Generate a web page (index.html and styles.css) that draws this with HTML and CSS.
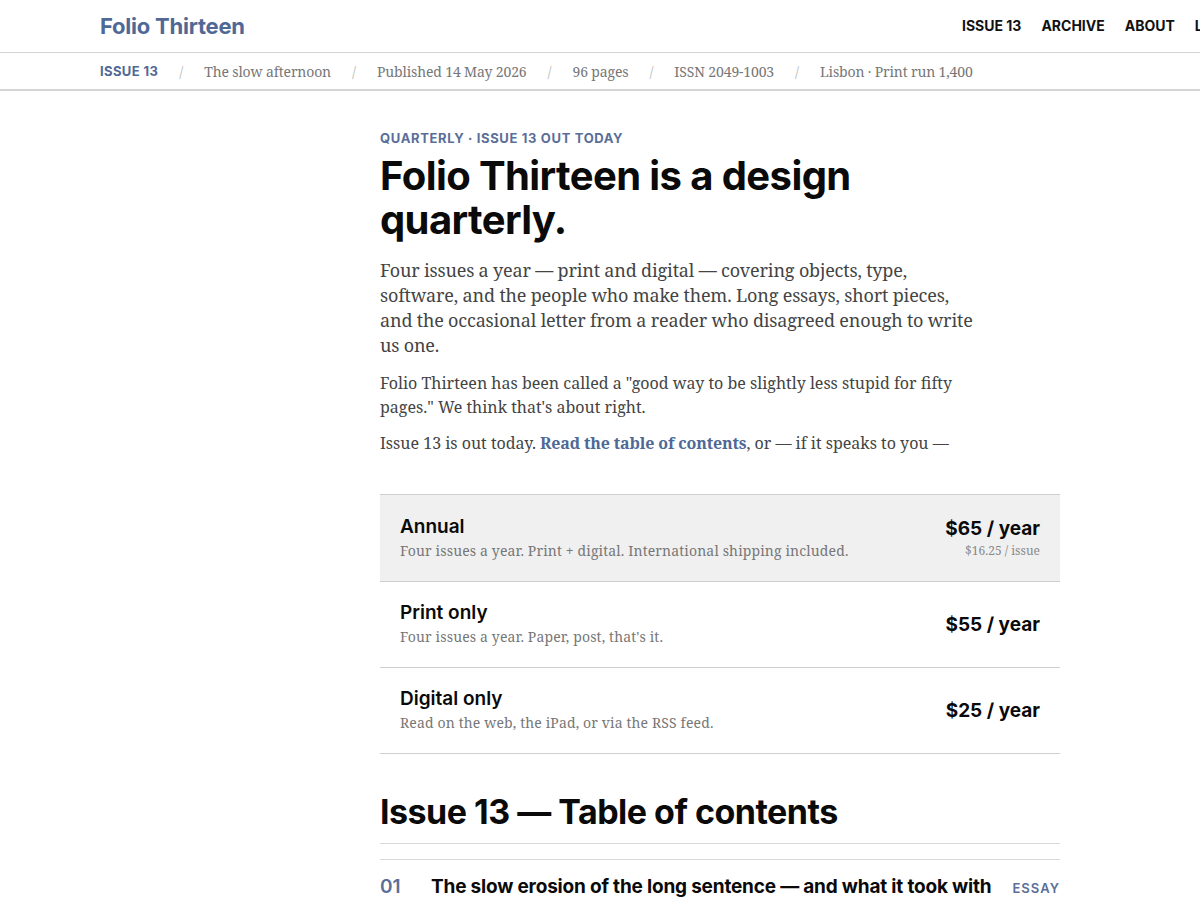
FILE: index.html
```html
<!DOCTYPE html>
<html lang="en">
<head>
<meta charset="utf-8">
<title>Folio Thirteen</title>
<link rel="stylesheet" href="styles.css">
</head>
<body>
<header class="site-header">
  <div class="header-inner">
    <a class="logo" href="#">Folio Thirteen</a>
    <nav class="nav">
      <a href="#">ISSUE 13</a>
      <a href="#">ARCHIVE</a>
      <a href="#">ABOUT</a>
      <a href="#">LOG IN</a>
    </nav>
  </div>
</header>
<div class="issue-bar">
  <div class="issue-inner">
    <span class="issue-tag">ISSUE 13</span>
    <span class="sep">/</span>
    <span>The slow afternoon</span>
    <span class="sep">/</span>
    <span>Published 14 May 2026</span>
    <span class="sep">/</span>
    <span>96 pages</span>
    <span class="sep">/</span>
    <span>ISSN 2049-1003</span>
    <span class="sep">/</span>
    <span>Lisbon · Print run 1,400</span>
  </div>
</div>
<main class="page">
  <aside class="side"></aside>
  <div class="content">
    <p class="eyebrow">QUARTERLY · ISSUE 13 OUT TODAY</p>
    <h1 class="title">Folio Thirteen is a design quarterly.</h1>
    <p class="lead">Four issues a year — print and digital — covering objects, type, software, and the people who make them. Long essays, short pieces, and the occasional letter from a reader who disagreed enough to write us one.</p>
    <p class="body">Folio Thirteen has been called a "good way to be slightly less stupid for fifty pages." We think that's about right.</p>
    <p class="body">Issue 13 is out today. <a class="link" href="#">Read the table of contents</a>, or — if it speaks to you —</p>

    <div class="plans">
      <div class="plan plan-featured">
        <div class="plan-info">
          <div class="plan-name">Annual</div>
          <div class="plan-desc">Four issues a year. Print + digital. International shipping included.</div>
        </div>
        <div class="plan-price">
          <div class="price">$65 / year</div>
          <div class="per">$16.25 / issue</div>
        </div>
      </div>
      <div class="plan">
        <div class="plan-info">
          <div class="plan-name">Print only</div>
          <div class="plan-desc">Four issues a year. Paper, post, that's it.</div>
        </div>
        <div class="plan-price">
          <div class="price">$55 / year</div>
        </div>
      </div>
      <div class="plan">
        <div class="plan-info">
          <div class="plan-name">Digital only</div>
          <div class="plan-desc">Read on the web, the iPad, or via the RSS feed.</div>
        </div>
        <div class="plan-price">
          <div class="price">$25 / year</div>
        </div>
      </div>
    </div>

    <h2 class="toc-title">Issue 13 — Table of contents</h2>
    <ol class="toc">
      <li class="toc-item">
        <span class="toc-num">01</span>
        <span class="toc-name">The slow erosion of the long sentence — and what it took with us</span>
        <span class="toc-type">ESSAY</span>
      </li>
      <li class="toc-item">
        <span class="toc-num">02</span>
        <span class="toc-name">A drawer of rulers</span>
        <span class="toc-type">OBJECTS</span>
      </li>
    </ol>
  </div>
</main>
</body>
</html>
```

FILE: styles.css
```css
* { box-sizing: border-box; }
html { overflow-x: hidden; }
body {
  margin: 0;
  background: #fff;
  color: #111;
  font-family: "Noto Serif", "Liberation Serif", serif;
}
a { text-decoration: none; color: inherit; }

.site-header {
  border-bottom: 1px solid #d4d4d4;
}
.header-inner {
  display: grid;
  grid-template-columns: 862px auto;
  align-items: center;
  height: 52px;
  padding-left: 100px;
  width: 1300px;
}
.logo {
  font-family: Inter, "Noto Sans", sans-serif;
  font-weight: 700;
  font-size: 22px;
  color: #4f6896;
  letter-spacing: -0.01em;
}
.nav {
  display: flex;
  gap: 20px;
  padding-bottom: 2px;
  font-family: Inter, "Noto Sans", sans-serif;
  font-weight: 700;
  font-size: 14px;
  color: #111;
}

.issue-bar {
  border-bottom: 2px solid #d4d4d4;
}
.issue-inner {
  display: flex;
  align-items: center;
  gap: 21px;
  height: 36px;
  padding-left: 100px;
  font-size: 14px;
  letter-spacing: -0.01em;
  color: #777;
}
.issue-tag {
  font-family: Inter, "Noto Sans", sans-serif;
  font-weight: 700;
  font-size: 13px;
  color: #4f6896;
  letter-spacing: 0.03em;
}
.sep { color: #bbb; }

.page {
  display: grid;
  grid-template-columns: 260px 680px;
  gap: 20px;
  padding-left: 100px;
  padding-top: 39px;
}
.eyebrow {
  margin: 0;
  font-family: Inter, "Noto Sans", sans-serif;
  font-weight: 700;
  font-size: 13px;
  letter-spacing: 0.05em;
  color: #5a6e98;
  line-height: 16px;
}
.title {
  margin: 8px 0 16px;
  font-family: Inter, "Noto Sans", sans-serif;
  font-weight: 700;
  font-size: 40px;
  line-height: 44px;
  letter-spacing: -0.015em;
  color: #0a0a0a;
  max-width: 500px;
}
.lead {
  margin: 0 0 13px;
  font-size: 18px;
  line-height: 25px;
  letter-spacing: -0.01em;
  color: #444;
  max-width: 604px;
}
.body {
  margin: 0 0 12px;
  font-size: 16px;
  line-height: 24px;
  color: #444;
  max-width: 604px;
}
.link {
  color: #4f6896;
  font-weight: 700;
  letter-spacing: -0.01em;
}

.plans {
  margin-top: 39px;
  border-top: 1px solid #cfcfcf;
}
.plan {
  display: flex;
  align-items: center;
  justify-content: space-between;
  padding: 20px;
  border-bottom: 1px solid #cfcfcf;
  min-height: 86px;
}
.plan-featured {
  background: #f0f0f0;
  min-height: 87px;
}
.plan-name {
  font-family: Inter, "Noto Sans", sans-serif;
  font-weight: 600;
  font-size: 19px;
  line-height: 22px;
  color: #0a0a0a;
}
.plan-desc {
  margin-top: 3px;
  font-size: 14px;
  line-height: 20px;
  letter-spacing: 0.01em;
  color: #777;
}
.plan-price { text-align: right; }
.price {
  font-family: Inter, "Noto Sans", sans-serif;
  font-weight: 700;
  font-size: 19px;
  line-height: 22px;
  color: #0a0a0a;
}
.per {
  margin-top: 3px;
  font-size: 12px;
  line-height: 16px;
  color: #888;
}

.toc-title {
  margin: 38px 0 0;
  padding-bottom: 11px;
  border-bottom: 1px solid #d8d8d8;
  font-family: Inter, "Noto Sans", sans-serif;
  font-weight: 700;
  font-size: 34px;
  line-height: 40px;
  letter-spacing: -0.015em;
  color: #0a0a0a;
}
.toc {
  list-style: none;
  margin: 15px 0 0;
  padding: 0;
  border-top: 1px solid #d8d8d8;
}
.toc-item {
  display: grid;
  grid-template-columns: 37px 1fr auto;
  gap: 14px;
  align-items: baseline;
  padding: 15px 0;
  border-bottom: 1px solid #e4e4e4;
}
.toc-num {
  font-family: Inter, "Noto Sans", sans-serif;
  font-weight: 600;
  font-size: 19px;
  color: #5a6e98;
}
.toc-name {
  font-family: Inter, "Noto Sans", sans-serif;
  font-weight: 700;
  font-size: 19px;
  line-height: 24px;
  letter-spacing: -0.01em;
  color: #0a0a0a;
}
.toc-type {
  font-family: Inter, "Noto Sans", sans-serif;
  font-weight: 600;
  font-size: 13px;
  letter-spacing: 0.08em;
  color: #5a6e98;
}
```
